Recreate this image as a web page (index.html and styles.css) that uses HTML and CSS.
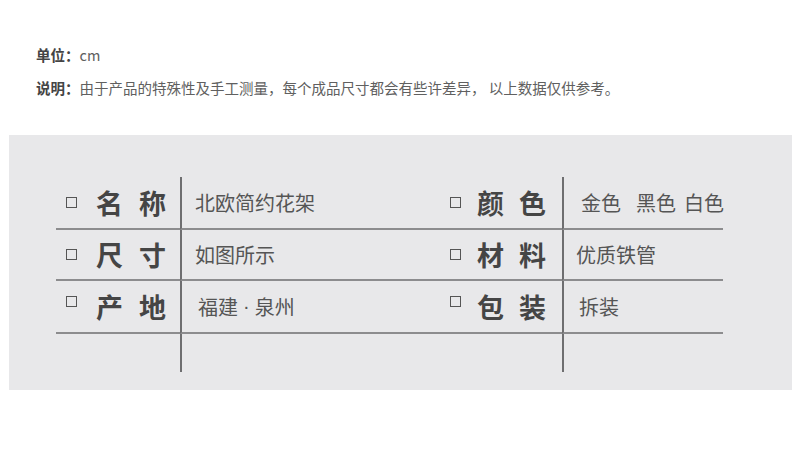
FILE: index.html
```html
<!DOCTYPE html>
<html lang="zh">
<head>
<meta charset="utf-8">
<link rel="stylesheet" href="styles.css">
</head>
<body>
<div class="notes">
  <p class="note"><b>单位：</b>cm</p>
  <p class="note"><b>说明：</b>由于产品的特殊性及手工测量，每个成品尺寸都会有些许差异， 以上数据仅供参考。</p>
</div>
<div class="panel">
  <div class="spec">
    <div class="lbl"><span class="box"></span><span class="name">名称</span></div>
    <div class="val">北欧简约花架</div>
    <div class="lbl rl"><span class="box"></span><span class="name">颜色</span></div>
    <div class="val rv"><span class="c1">金色</span><span class="c2">黑色</span><span>白色</span></div>

    <div class="lbl"><span class="box"></span><span class="name">尺寸</span></div>
    <div class="val">如图所示</div>
    <div class="lbl rl"><span class="box"></span><span class="name">材料</span></div>
    <div class="val rv r2">优质铁管</div>

    <div class="lbl"><span class="box up"></span><span class="name">产地</span></div>
    <div class="val v3">福建<span class="dot">·</span>泉州</div>
    <div class="lbl rl"><span class="box up"></span><span class="name">包装</span></div>
    <div class="val rv r3">拆装</div>

    <div class="lbl last"></div>
    <div class="val last"></div>
    <div class="lbl rl last"></div>
    <div class="val rv last"></div>
  </div>
</div>
</body>
</html>
```
FILE: styles.css
```css
html, body {
  margin: 0;
  padding: 0;
  background: #ffffff;
}
body {
  font-family: "Noto Sans CJK SC", "Microsoft YaHei", sans-serif;
  color: #595959;
  width: 800px;
  height: 454px;
  overflow: hidden;
}
.notes {
  padding: 44px 0 0 36px;
  height: 135px;
  box-sizing: border-box;
}
.note {
  margin: 0 0 11px 0;
  font-size: 14.5px;
  line-height: 22px;
  color: #606060;
  white-space: nowrap;
}
.note b {
  font-weight: 700;
  color: #444;
}
.panel {
  margin-left: 9px;
  width: 783px;
  height: 255px;
  background: #e8e8ea;
  padding: 42px 0 0 47px;
  box-sizing: border-box;
}
.spec {
  display: grid;
  grid-template-columns: 124px 262px 120px 161px;
  grid-template-rows: 53px 51px 53px 38px;
}
.lbl, .val {
  border-bottom: 2px solid #8c8c8e;
  display: flex;
  align-items: center;
  box-sizing: border-box;
  white-space: nowrap;
  min-width: 0;
}
.val {
  border-left: 2px solid #6e6e70;
  padding-left: 13px;
  font-size: 20px;
  color: #555;
}
.rv { padding-left: 17px; }
.r2 { padding-left: 12px; }
.r3 { padding-left: 15px; }
.v3 { padding-left: 16px; }
.dot {
  font-family: "Liberation Sans", sans-serif;
  margin: 0 5px;
}
.lbl {
  padding-left: 10px;
}
.rl { padding-left: 8px; }
.last { border-bottom: none; }
.box {
  width: 9px;
  height: 9px;
  border: 1px solid #555;
  margin-right: 19px;
  flex: none;
}
.box.up { position: relative; top: -5px; }
.rl .box { margin-right: 16px; }
.name {
  font-size: 27px;
  font-weight: 700;
  letter-spacing: 16px;
  color: #454545;
  line-height: 1;
  flex: none;
}
.rl .name { letter-spacing: 15px; }
.c1 { margin-right: 15px; }
.c2 { margin-right: 8px; }
```
